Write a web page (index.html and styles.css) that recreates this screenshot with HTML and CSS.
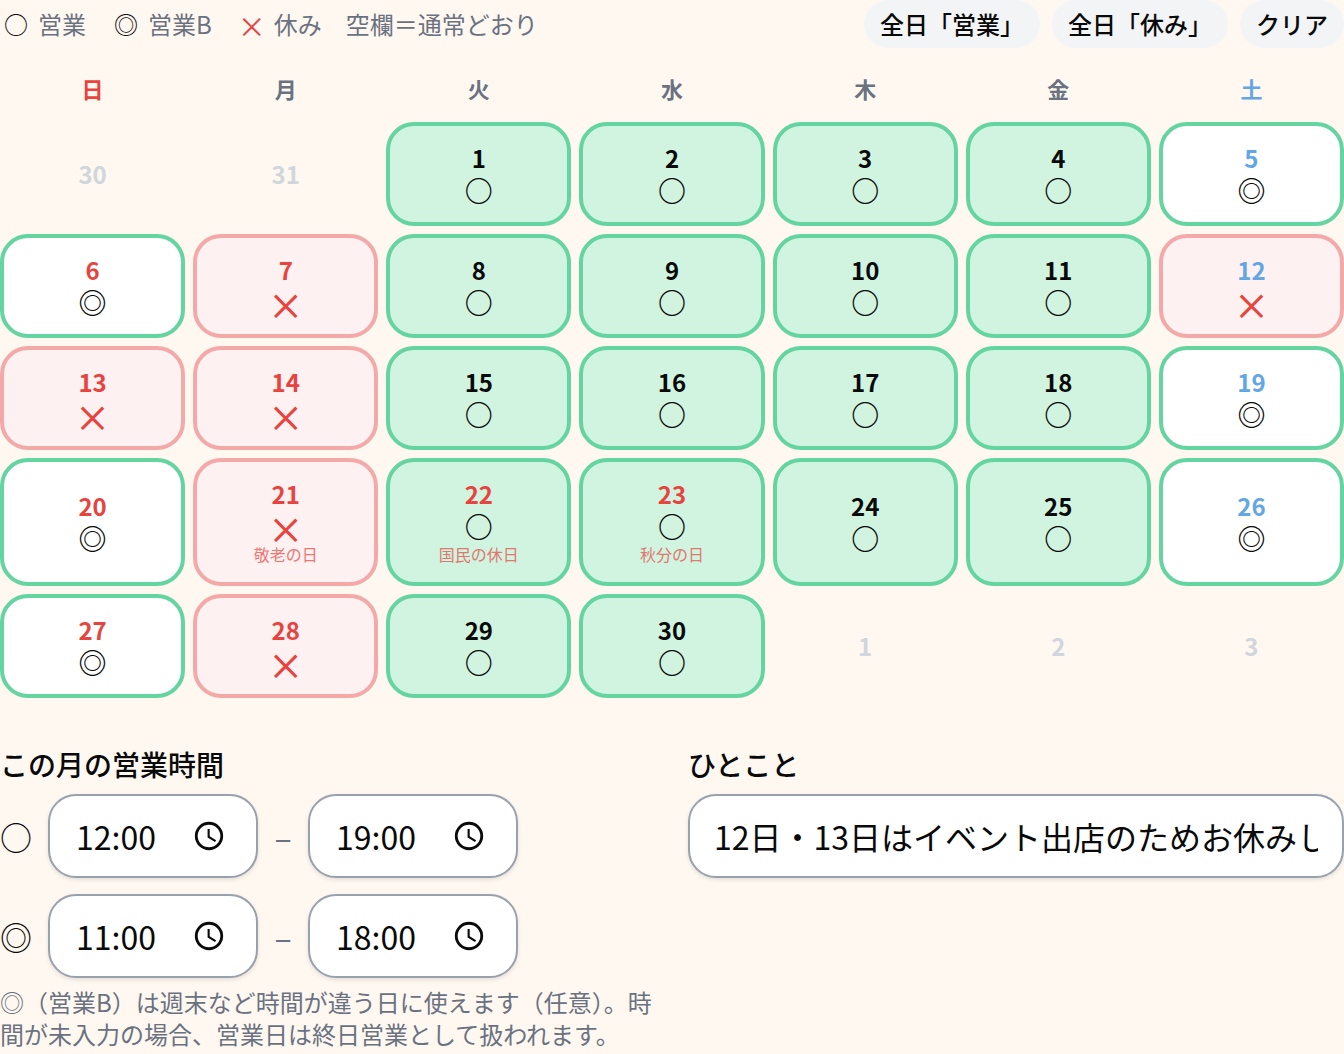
FILE: index.html
```html
<!DOCTYPE html>
<html lang="ja">
<head>
    <meta charset="UTF-8">
    <meta name="viewport" content="width=device-width, initial-scale=1.0">
    <title>営業カレンダー</title>
    <link rel="stylesheet" href="styles.css">
</head>
<body>
    <svg class="sprite" aria-hidden="true">
        <symbol id="clock" viewBox="0 0 24 24">
            <circle cx="12" cy="12" r="9" fill="none" stroke="currentColor" stroke-width="2"/>
            <path d="M12.5 7H11v6l5.25 3.15.75-1.23-4.5-2.67z" fill="currentColor"/>
        </symbol>
    </svg>

    <div class="toolbar">
        <div class="legend">
            <span class="legend-item"><span class="symbol">○</span>営業</span>
            <span class="legend-item"><span class="symbol">◎</span>営業B</span>
            <span class="legend-item"><span class="symbol symbol-closed">×</span>休み</span>
            <span>空欄＝通常どおり</span>
        </div>
        <div class="actions">
            <button type="button" class="pill">全日「営業」</button>
            <button type="button" class="pill">全日「休み」</button>
            <button type="button" class="pill">クリア</button>
        </div>
    </div>

    <div class="weekdays">
        <span class="sun">日</span>
        <span>月</span>
        <span>火</span>
        <span>水</span>
        <span>木</span>
        <span>金</span>
        <span class="sat">土</span>
    </div>

    <div class="calendar">
        <div class="day outside">30</div>
        <div class="day outside">31</div>
        <button type="button" class="day open"><span class="num">1</span><span class="mark">○</span></button>
        <button type="button" class="day open"><span class="num">2</span><span class="mark">○</span></button>
        <button type="button" class="day open"><span class="num">3</span><span class="mark">○</span></button>
        <button type="button" class="day open"><span class="num">4</span><span class="mark">○</span></button>
        <button type="button" class="day open-b"><span class="num sat">5</span><span class="mark">◎</span></button>

        <button type="button" class="day open-b"><span class="num sun">6</span><span class="mark">◎</span></button>
        <button type="button" class="day closed"><span class="num sun">7</span><span class="mark">×</span></button>
        <button type="button" class="day open"><span class="num">8</span><span class="mark">○</span></button>
        <button type="button" class="day open"><span class="num">9</span><span class="mark">○</span></button>
        <button type="button" class="day open"><span class="num">10</span><span class="mark">○</span></button>
        <button type="button" class="day open"><span class="num">11</span><span class="mark">○</span></button>
        <button type="button" class="day closed"><span class="num sat">12</span><span class="mark">×</span></button>

        <button type="button" class="day closed"><span class="num sun">13</span><span class="mark">×</span></button>
        <button type="button" class="day closed"><span class="num sun">14</span><span class="mark">×</span></button>
        <button type="button" class="day open"><span class="num">15</span><span class="mark">○</span></button>
        <button type="button" class="day open"><span class="num">16</span><span class="mark">○</span></button>
        <button type="button" class="day open"><span class="num">17</span><span class="mark">○</span></button>
        <button type="button" class="day open"><span class="num">18</span><span class="mark">○</span></button>
        <button type="button" class="day open-b"><span class="num sat">19</span><span class="mark">◎</span></button>

        <button type="button" class="day open-b"><span class="num sun">20</span><span class="mark">◎</span></button>
        <button type="button" class="day closed"><span class="num sun">21</span><span class="mark">×</span><span class="holiday">敬老の日</span></button>
        <button type="button" class="day open"><span class="num sun">22</span><span class="mark">○</span><span class="holiday">国民の休日</span></button>
        <button type="button" class="day open"><span class="num sun">23</span><span class="mark">○</span><span class="holiday">秋分の日</span></button>
        <button type="button" class="day open"><span class="num">24</span><span class="mark">○</span></button>
        <button type="button" class="day open"><span class="num">25</span><span class="mark">○</span></button>
        <button type="button" class="day open-b"><span class="num sat">26</span><span class="mark">◎</span></button>

        <button type="button" class="day open-b"><span class="num sun">27</span><span class="mark">◎</span></button>
        <button type="button" class="day closed"><span class="num sun">28</span><span class="mark">×</span></button>
        <button type="button" class="day open"><span class="num">29</span><span class="mark">○</span></button>
        <button type="button" class="day open"><span class="num">30</span><span class="mark">○</span></button>
        <div class="day outside">1</div>
        <div class="day outside">2</div>
        <div class="day outside">3</div>
    </div>

    <form class="settings">
        <div class="hours">
            <h2 class="label">この月の営業時間</h2>
            <div class="time-row">
                <span class="time-mark">○</span>
                <label class="field time">
                    <input type="text" inputmode="numeric" value="12:00" aria-label="営業 開始">
                    <svg class="clock"><use href="#clock"/></svg>
                </label>
                <span class="dash">–</span>
                <label class="field time">
                    <input type="text" inputmode="numeric" value="19:00" aria-label="営業 終了">
                    <svg class="clock"><use href="#clock"/></svg>
                </label>
            </div>
            <div class="time-row">
                <span class="time-mark">◎</span>
                <label class="field time">
                    <input type="text" inputmode="numeric" value="11:00" aria-label="営業B 開始">
                    <svg class="clock"><use href="#clock"/></svg>
                </label>
                <span class="dash">–</span>
                <label class="field time">
                    <input type="text" inputmode="numeric" value="18:00" aria-label="営業B 終了">
                    <svg class="clock"><use href="#clock"/></svg>
                </label>
            </div>
            <p class="note">◎（営業B）は週末など時間が違う日に使えます（任意）。時間が未入力の場合、営業日は終日営業として扱われます。</p>
        </div>
        <div class="comment">
            <label class="label" for="comment">ひとこと</label>
            <input type="text" class="field" id="comment" value="12日・13日はイベント出店のためお休みします">
        </div>
    </form>
</body>
</html>
```
FILE: styles.css
```css
* {
    margin: 0;
    padding: 0;
    box-sizing: border-box;
}

body {
    background-color: #fff8f0;
    color: #0a0a0a;
    font-family: 'Noto Sans CJK JP', sans-serif;
    font-size: 24px;
    line-height: 32px;
}

button, input {
    font: inherit;
    color: inherit;
}

button {
    border: none;
    cursor: pointer;
}

.sprite {
    display: none;
}

.sun {
    color: #e7433f;
}

.sat {
    color: #63a6e6;
}

/* legend and bulk actions */
.toolbar {
    display: flex;
    justify-content: space-between;
    align-items: center;
}

.legend {
    display: flex;
    gap: 24px;
    color: #6a7282;
}

.legend-item {
    display: flex;
    gap: 6px;
}

.symbol {
    width: 32px;
    text-align: center;
    color: #0a0a0a;
}

.symbol-closed {
    padding-top: 4px;
    color: #e7433f;
    font-size: 28px;
    line-height: 28px;
}

.actions {
    display: flex;
    gap: 12px;
}

.pill {
    padding: 8px 16px;
    border-radius: 24px;
    background-color: #f3f4f6;
    font-weight: 500;
}

/* calendar */
.weekdays, .calendar {
    display: grid;
    grid-template-columns: repeat(7, 1fr);
    gap: 8px;
}

.weekdays {
    margin: 24px 0 18px;
    color: #6a7282;
    font-size: 22px;
    font-weight: 700;
    text-align: center;
}

.weekdays .sun {
    color: #e7433f;
}

.weekdays .sat {
    color: #63a6e6;
}

.day {
    display: flex;
    flex-direction: column;
    align-items: center;
    justify-content: center;
    min-height: 104px;
    padding: 16px 8px;
    border: 4px solid transparent;
    border-radius: 28px;
    font-weight: 700;
}

.outside {
    color: #d1d5dc;
}

.open {
    background-color: #d1f4e0;
    border-color: #64d4a0;
}

.open-b {
    background-color: #ffffff;
    border-color: #64d4a0;
}

.closed {
    background-color: #fef1f1;
    border-color: #f4a9a9;
}

.mark {
    font-size: 28px;
}

.closed .mark {
    padding-top: 4px;
    color: #e7433f;
    font-size: 36px;
    font-weight: 500;
    line-height: 28px;
}

.holiday {
    color: #e7433f;
    font-size: 16px;
    font-weight: 400;
    line-height: 24px;
    opacity: 0.7;
}

/* hours and comment */
.settings {
    display: grid;
    grid-template-columns: 1fr 1fr;
    gap: 32px;
    margin-top: 48px;
}

.hours, .comment {
    display: flex;
    flex-direction: column;
}

.label {
    margin-bottom: 12px;
    font-size: 28px;
    font-weight: 500;
    line-height: 36px;
}

.time-row {
    display: flex;
    align-items: center;
    gap: 16px;
    margin-bottom: 16px;
    font-size: 32px;
}

.dash {
    width: 18px;
    text-align: center;
    color: #6a7282;
}

.field {
    height: 84px;
    padding: 0 24px;
    border: 2px solid #99a1af;
    border-radius: 28px;
    background-color: #ffffff;
    box-shadow: 0 2px 4px rgba(0, 0, 0, 0.1);
    font-size: 32px;
}

.time {
    display: flex;
    align-items: center;
    justify-content: space-between;
    width: 210px;
    padding: 0 30px 0 26px;
}

.time input {
    width: 96px;
    border: none;
    outline: none;
    background: none;
}

.clock {
    width: 34px;
    height: 34px;
}

.note {
    margin-top: -8px;
    color: #6a7282;
}
```
